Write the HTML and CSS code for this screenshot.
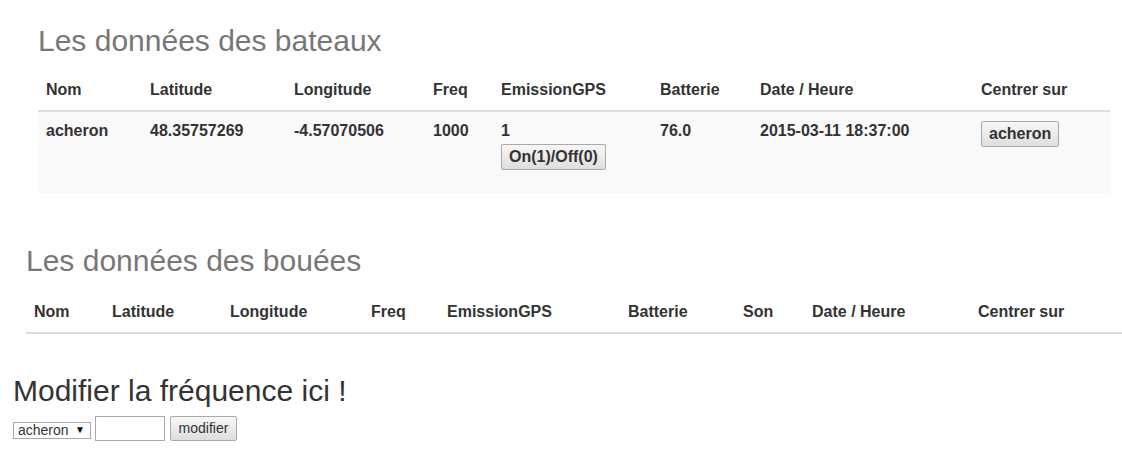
FILE: index.html
```html
<!DOCTYPE html>
<html lang="fr">
<head>
<meta charset="utf-8">
<title>Données</title>
<link rel="stylesheet" href="styles.css">
</head>
<body>
<section class="section boats">
  <h2 class="title muted">Les données des bateaux</h2>
  <table class="data">
    <thead>
      <tr>
        <th class="b-nom">Nom</th>
        <th class="b-lat">Latitude</th>
        <th class="b-lon">Longitude</th>
        <th class="b-freq">Freq</th>
        <th class="b-gps">EmissionGPS</th>
        <th class="b-bat">Batterie</th>
        <th class="b-date">Date / Heure</th>
        <th class="b-cent">Centrer sur</th>
      </tr>
    </thead>
    <tbody>
      <tr>
        <td>acheron</td>
        <td>48.35757269</td>
        <td>-4.57070506</td>
        <td>1000</td>
        <td>1<br><form class="gps-form"><button type="button" class="btn">On(1)/Off(0)</button></form></td>
        <td>76.0</td>
        <td>2015-03-11 18:37:00</td>
        <td><button type="button" class="btn">acheron</button></td>
      </tr>
    </tbody>
  </table>
</section>

<section class="section buoys">
  <h2 class="title muted">Les données des bouées</h2>
  <table class="data">
    <thead>
      <tr>
        <th class="u-nom">Nom</th>
        <th class="u-lat">Latitude</th>
        <th class="u-lon">Longitude</th>
        <th class="u-freq">Freq</th>
        <th class="u-gps">EmissionGPS</th>
        <th class="u-bat">Batterie</th>
        <th class="u-son">Son</th>
        <th class="u-date">Date / Heure</th>
        <th class="u-cent">Centrer sur</th>
      </tr>
    </thead>
    <tbody></tbody>
  </table>
</section>

<section class="section freq">
  <h2 class="title dark">Modifier la fréquence ici !</h2>
  <form class="freq-form">
    <span class="select-wrap">
      <select class="sel"><option>acheron</option></select>
      <span class="sel-arrow">▼</span>
    </span>
    <input type="text" class="txt">
    <button type="button" class="btn-plain">modifier</button>
  </form>
</section>
</body>
</html>
```

FILE: styles.css
```css
html, body {
  margin: 0;
  padding: 0;
  background: #fff;
}
body {
  font-family: "Liberation Sans", Arial, sans-serif;
  color: #333;
  font-size: 16px;
}
.section {
  box-sizing: border-box;
}
.boats {
  padding: 24px 12px 0 38px;
}
.buoys {
  padding: 51px 0 0 26px;
}
.freq {
  padding: 40px 0 0 13px;
}
.title {
  margin: 0 0 14px 0;
  font-size: 30px;
  font-weight: normal;
  line-height: 33px;
}
.title.muted { color: #777; }
.title.dark { color: #333; margin-bottom: 9px; }
.buoys .title { margin-bottom: 16px; }

.data {
  width: 100%;
  border-collapse: collapse;
  table-layout: fixed;
}
.data th, .data td {
  padding: 8px;
  text-align: left;
  font-weight: bold;
  font-size: 16px;
  line-height: 22.86px;
  color: #333;
  white-space: nowrap;
}
.data th {
  vertical-align: bottom;
  border-bottom: 2px solid #ddd;
}
.data td {
  vertical-align: top;
  background: #f9f9f9;
}
.b-nom { width: 88px; }
.b-lat { width: 128px; }
.b-lon { width: 123px; }
.b-freq { width: 52px; }
.b-gps { width: 143px; }
.b-bat { width: 84px; }
.b-date { width: 205px; }
.b-cent { width: auto; }

.u-nom { width: 62px; }
.u-lat { width: 102px; }
.u-lon { width: 125px; }
.u-freq { width: 60px; }
.u-gps { width: 165px; }
.u-bat { width: 99px; }
.u-son { width: 53px; }
.u-date { width: 150px; }
.u-cent { width: auto; }

.gps-form {
  margin: 0 0 15px 0;
}
.btn {
  font-family: "Liberation Sans", Arial, sans-serif;
  font-weight: bold;
  font-size: 16px;
  line-height: 20px;
  color: #333;
  padding: 2px 7px;
  border: 1px solid #a9a9a9;
  border-radius: 2px;
  background: linear-gradient(#f7f7f7, #dedede);
  margin: 1px 0 0 0;
  vertical-align: top;
}

.freq-form {
  display: flex;
  align-items: center;
  gap: 4px;
  margin: 0;
}
.select-wrap {
  position: relative;
  display: inline-block;
  margin-top: 4px;
}
.sel {
  appearance: none;
  -webkit-appearance: none;
  box-sizing: border-box;
  width: 78px;
  height: 17px;
  margin: 0;
  padding: 0 0 0 4px;
  border: 1px solid #a9a9a9;
  border-radius: 0;
  background: #fff;
  font-family: "Liberation Sans", Arial, sans-serif;
  font-size: 14px;
  line-height: 15px;
  color: #333;
}
.sel-arrow {
  position: absolute;
  right: 6px;
  top: 3px;
  font-size: 10px;
  line-height: 11px;
  color: #000;
  pointer-events: none;
}
.txt {
  box-sizing: border-box;
  width: 70px;
  height: 25px;
  margin: 0;
  padding: 0 4px;
  border: 1px solid #a9a9a9;
  font-size: 14px;
}
.btn-plain {
  box-sizing: border-box;
  height: 25px;
  width: 67px;
  margin: 0 0 0 1px;
  padding: 0 6px;
  border: 1px solid #a9a9a9;
  border-radius: 2px;
  background: linear-gradient(#f7f7f7, #dedede);
  font-family: "Liberation Sans", Arial, sans-serif;
  font-size: 14px;
  color: #333;
}
```
